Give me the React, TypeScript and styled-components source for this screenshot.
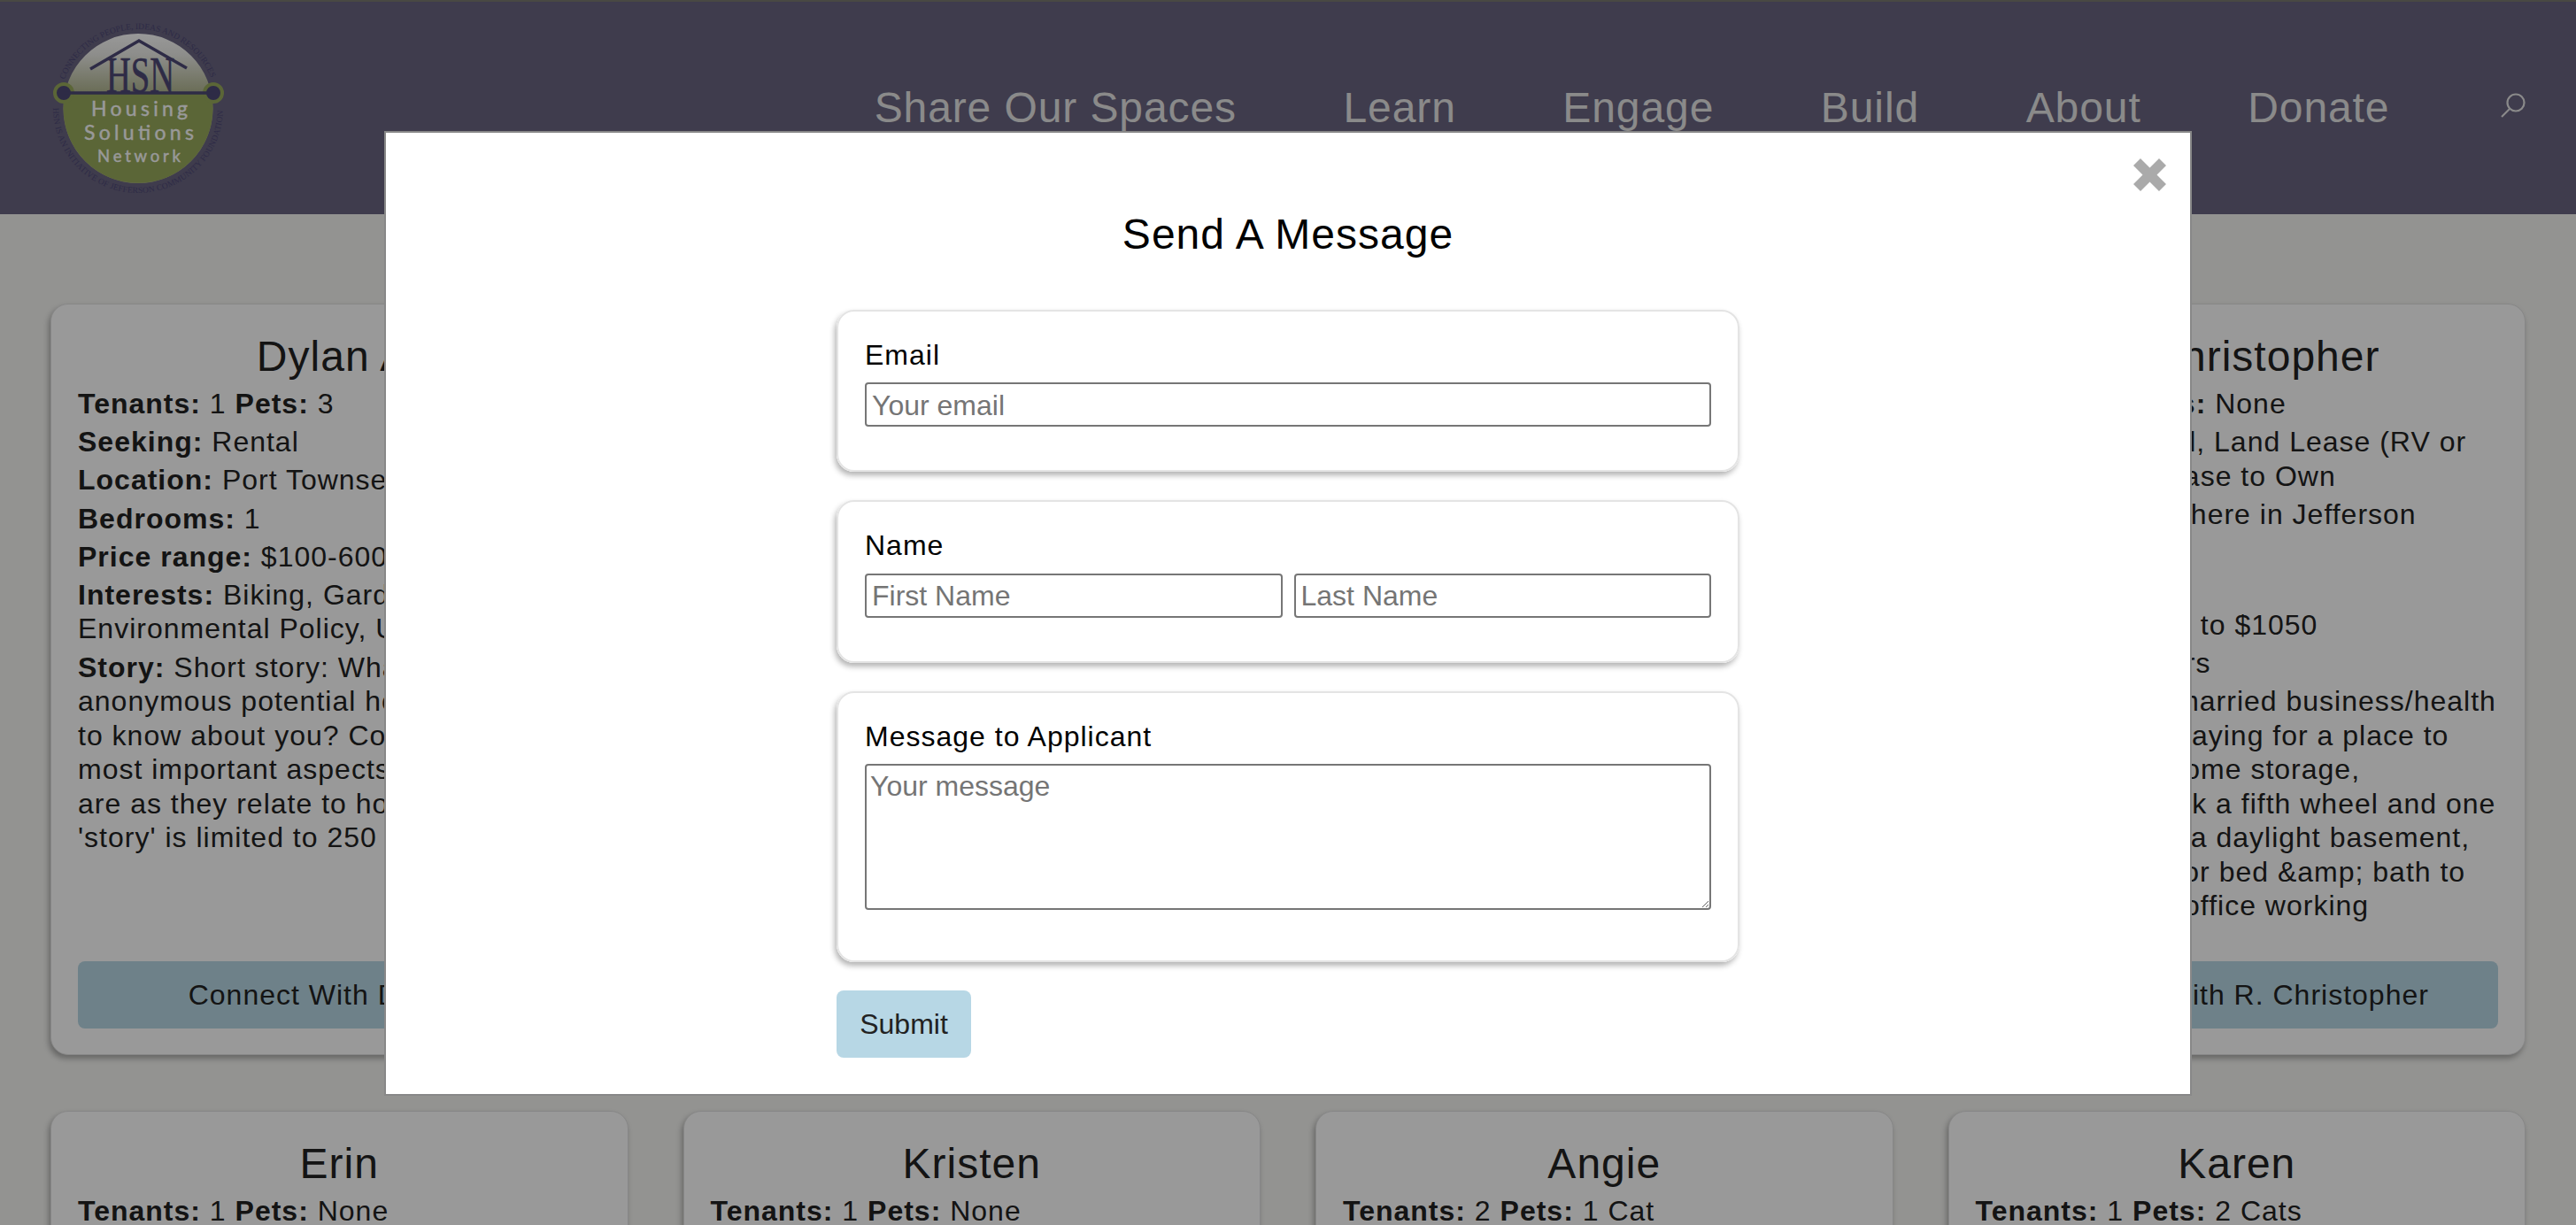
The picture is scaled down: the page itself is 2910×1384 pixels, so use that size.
import React from "react";
import styled, { createGlobalStyle } from "styled-components";

const Global = createGlobalStyle`
  html, body { margin: 0; padding: 0; height: 100%; overflow: hidden; background: #f5f5f2; }
  body { font-family: "Liberation Sans", Arial, sans-serif; color: #000; }
  #root { height: 100%; }
  * { box-sizing: border-box; }
`;

const Page = styled.div`
  height: 1384px;
  overflow: hidden;
  background: #f5f5f2;
`;

const Header = styled.header`
  display: flex;
  height: 242px;
  border-top: 2px solid #7a7a70;
  background: #696480;
`;

const LogoArt = styled.svg`
  display: block;
  flex: none;
`;

const Nav = styled.nav`
  display: flex;
  align-items: flex-start;
  gap: 120.6px;
  margin-left: auto;
  padding: 92px 57px 0 0;
`;

const NavLink = styled.a`
  font-size: 48px;
  line-height: 56px;
  letter-spacing: 0.9px;
  color: #e6e6e6;
`;

const SearchIcon = styled.svg`
  display: block;
  flex: none;
  margin: 11px 0 0 5px;
`;

const CardGrid = styled.main`
  display: grid;
  grid-template-columns: repeat(4, minmax(0, 1fr));
  gap: 63px 62px;
  padding: 101px 57px 0;
`;

const Card = styled.article`
  display: flex;
  flex-direction: column;
  min-width: 0;
  min-height: 849px;
  padding: 30px 30px 29px;
  border: 1px solid #e2e2e2;
  border-radius: 20px;
  background: #fff;
  box-shadow: -2px 4px 6px rgba(0, 0, 0, 0.3);
  color: #222;
`;

const CardTitle = styled.h2`
  margin: 0 0 5px;
  font-size: 48px;
  font-weight: 400;
  line-height: 58px;
  letter-spacing: 1px;
  text-align: center;
`;

const Field = styled.p`
  margin: 0 0 4.7px;
  font-size: 32px;
  line-height: 38.5px;
  letter-spacing: 1px;
  white-space: nowrap;

  b {
    font-weight: 700;
  }
`;

const ConnectButton = styled.div`
  margin-top: auto;
  height: 76px;
  border-radius: 8px;
  background: #b7d7e5;
  font-size: 32px;
  line-height: 76px;
  letter-spacing: 1px;
  text-align: center;
  white-space: nowrap;
`;

const Overlay = styled.div`
  position: fixed;
  inset: 0;
  display: flex;
  justify-content: center;
  align-items: flex-start;
  padding-top: 148px;
  background: rgba(0, 0, 0, 0.4);
`;

const Modal = styled.section`
  position: relative;
  display: flex;
  flex-direction: column;
  align-items: center;
  width: 2042px;
  height: 1090px;
  padding-top: 86px;
  border: 2px solid #888;
  background: #fff;
`;

const CloseIcon = styled.svg`
  position: absolute;
  top: 29px;
  right: 27px;
`;

const ModalTitle = styled.h1`
  margin: 0 0 56px;
  font-size: 48px;
  font-weight: 400;
  line-height: 58px;
  letter-spacing: 1px;
`;

const Form = styled.form`
  display: flex;
  flex-direction: column;
  align-items: flex-start;
  gap: 32px;
  width: 1020px;
`;

const Group = styled.fieldset`
  display: block;
  width: 100%;
  margin: 0;
  padding: 30px;
  border: 2px solid #e4e4e4;
  border-radius: 20px;
  background: #fff;
  box-shadow: -2px 4px 6px rgba(0, 0, 0, 0.3);
`;

const Label = styled.label`
  display: block;
  margin-bottom: 12px;
  font-size: 32px;
  line-height: 38.4px;
  letter-spacing: 1px;
`;

const InputRow = styled.div`
  display: flex;
  gap: 13px;
  margin-bottom: 19px;
`;

const TextInput = styled.input`
  flex: 1 1 0;
  min-width: 0;
  height: 50px;
  padding: 2px 6px 0;
  border: 2px solid #767676;
  border-radius: 4px;
  background: #fff;
  font: 32px "Liberation Sans", Arial, sans-serif;
`;

const MessageBox = styled.textarea`
  display: block;
  width: 100%;
  height: 165px;
  margin-bottom: 27px;
  padding: 5px 4px 4px;
  border: 2px solid #767676;
  border-radius: 4px;
  background: #fff;
  font: 32px "Liberation Sans", Arial, sans-serif;
  resize: vertical;
`;

const Submit = styled.button`
  width: 152px;
  height: 76px;
  padding: 0;
  border: 0;
  border-radius: 8px;
  background: #b7d7e5;
  color: #222;
  font: 32px "Liberation Sans", Arial, sans-serif;
`;

const Logo = () => (
  <LogoArt width="280" height="240" viewBox="0 2 280 240" aria-label="Housing Solutions Network">
    <defs>
      <linearGradient id="dome" x1="0" y1="38" x2="0" y2="105" gradientUnits="userSpaceOnUse">
        <stop offset="0" stopColor="#ffffff" />
        <stop offset="0.35" stopColor="#ecece8" />
        <stop offset="1" stopColor="#b0b58f" />
      </linearGradient>
      <path id="arcTop" d="M 72.9 90 A 89 89 0 0 1 239.1 90" />
      <path id="arcBottom" d="M 60 122 A 96 96 0 0 0 252 122" />
    </defs>
    <path d="M 71.5 122.5 A 84.5 84.5 0 0 1 240.5 122.5 A 84.5 84.5 0 0 1 71.5 122.5 Z" fill="url(#dome)" />
    <path d="M 73.3 105 L 238.7 105 A 84.5 84.5 0 1 1 73.3 105 Z" fill="#98aa5d" />
    <circle cx="72" cy="105" r="10" fill="#4d4876" stroke="#98aa5d" strokeWidth="4" />
    <circle cx="241" cy="105" r="10" fill="#4d4876" stroke="#98aa5d" strokeWidth="4" />
    <path d="M 72 105 H 241" stroke="#4d4876" strokeWidth="3.5" />
    <path d="M 102 78 L 157 46 L 211 77" fill="none" stroke="#4d4876" strokeWidth="3.5" />
    <text x="120" y="104" fontFamily="Liberation Serif" fontSize="58" fill="#4d4876" stroke="#4d4876" strokeWidth="0.7" textLength="77" lengthAdjust="spacingAndGlyphs">HSN</text>
    <g fontFamily="Lato" fill="#fff" stroke="#fff" strokeWidth="0.4">
      <text x="103" y="131" fontSize="23" textLength="109">Housing</text>
      <text x="95" y="158" fontSize="23" textLength="124">Solutions</text>
      <text x="110" y="183" fontSize="18.5" textLength="94">Network</text>
    </g>
    <g fontFamily="Liberation Serif" fontSize="9.5" fill="#4d4876">
      <text><textPath href="#arcTop" textLength="212">CONNECTING PEOPLE, IDEAS AND RESOURCES</textPath></text>
      <text><textPath href="#arcBottom" textLength="298">HSN IS AN INITIATIVE OF JEFFERSON COMMUNITY FOUNDATION</textPath></text>
    </g>
  </LogoArt>
);

const navItems = ["Share Our Spaces", "Learn", "Engage", "Build", "About", "Donate"];

export default function App() {
  return (
    <Page>
      <Global />
      <Header>
        <Logo />
        <Nav>
          {navItems.map((n) => (
            <NavLink key={n}>{n}</NavLink>
          ))}
          <SearchIcon width="28" height="28" viewBox="0 0 28 28" fill="none" stroke="#e6e6e6" strokeWidth="2.2">
            <circle cx="17" cy="11" r="9.5" />
            <path d="M 10 18 L 1 27" />
          </SearchIcon>
        </Nav>
      </Header>
      <CardGrid>
        <Card>
          <CardTitle>Dylan A.</CardTitle>
          <Field><b>Tenants:</b> 1 <b>Pets:</b> 3</Field>
          <Field><b>Seeking:</b> Rental</Field>
          <Field><b>Location:</b> Port Townsend</Field>
          <Field><b>Bedrooms:</b> 1</Field>
          <Field><b>Price range:</b> $100-600</Field>
          <Field><b>Interests:</b> Biking, Gardening,<br />Environmental Policy, Urban</Field>
          <Field>
            <b>Story:</b> Short story: What would you like<br />
            anonymous potential housemates<br />
            to know about you? Consider the<br />
            most important aspects of who you<br />
            are as they relate to housing. Your<br />
            'story' is limited to 250 characters.
          </Field>
          <ConnectButton>Connect With Dylan A.</ConnectButton>
        </Card>
        <Card />
        <Card />
        <Card>
          <CardTitle>R. Christopher</CardTitle>
          <Field><b>Tenants:</b> 1 <b>Pets:</b> None</Field>
          <Field><b>Seeking:</b> Rental, Land Lease (RV or<br />Trailer Pad), Lease to Own</Field>
          <Field><b>Location:</b> Anywhere in Jefferson<br />County</Field>
          <Field><b>Bedrooms:</b> 1</Field>
          <Field><b>Price range:</b> $0 to $1050</Field>
          <Field><b>Interests:</b> Others</Field>
          <Field>
            <b>Story:</b> Recent married business/health<br />
            coaches, now staying for a place to<br />
            life along with some storage,<br />
            I have a big truck a fifth wheel and one<br />
            Old dogs. Want a daylight basement,<br />
            a large main floor bed &amp;amp; bath to<br />
            and use for my office working
          </Field>
          <ConnectButton>Connect With R. Christopher</ConnectButton>
        </Card>
        <Card>
          <CardTitle>Erin</CardTitle>
          <Field><b>Tenants:</b> 1 <b>Pets:</b> None</Field>
        </Card>
        <Card>
          <CardTitle>Kristen</CardTitle>
          <Field><b>Tenants:</b> 1 <b>Pets:</b> None</Field>
        </Card>
        <Card>
          <CardTitle>Angie</CardTitle>
          <Field><b>Tenants:</b> 2 <b>Pets:</b> 1 Cat</Field>
        </Card>
        <Card>
          <CardTitle>Karen</CardTitle>
          <Field><b>Tenants:</b> 1 <b>Pets:</b> 2 Cats</Field>
        </Card>
      </CardGrid>
      <Overlay>
        <Modal>
          <CloseIcon width="37" height="37" viewBox="0 0 37 37" fill="#aaa">
            <path d="M 8 0 L 18.5 10.5 L 29 0 L 37 8 L 26.5 18.5 L 37 29 L 29 37 L 18.5 26.5 L 8 37 L 0 29 L 10.5 18.5 L 0 8 Z" />
          </CloseIcon>
          <ModalTitle>Send A Message</ModalTitle>
          <Form>
            <Group>
              <Label>Email</Label>
              <InputRow>
                <TextInput placeholder="Your email" />
              </InputRow>
            </Group>
            <Group>
              <Label>Name</Label>
              <InputRow>
                <TextInput placeholder="First Name" />
                <TextInput placeholder="Last Name" />
              </InputRow>
            </Group>
            <Group>
              <Label>Message to Applicant</Label>
              <MessageBox placeholder="Your message" />
            </Group>
            <Submit type="button">Submit</Submit>
          </Form>
        </Modal>
      </Overlay>
    </Page>
  );
}
